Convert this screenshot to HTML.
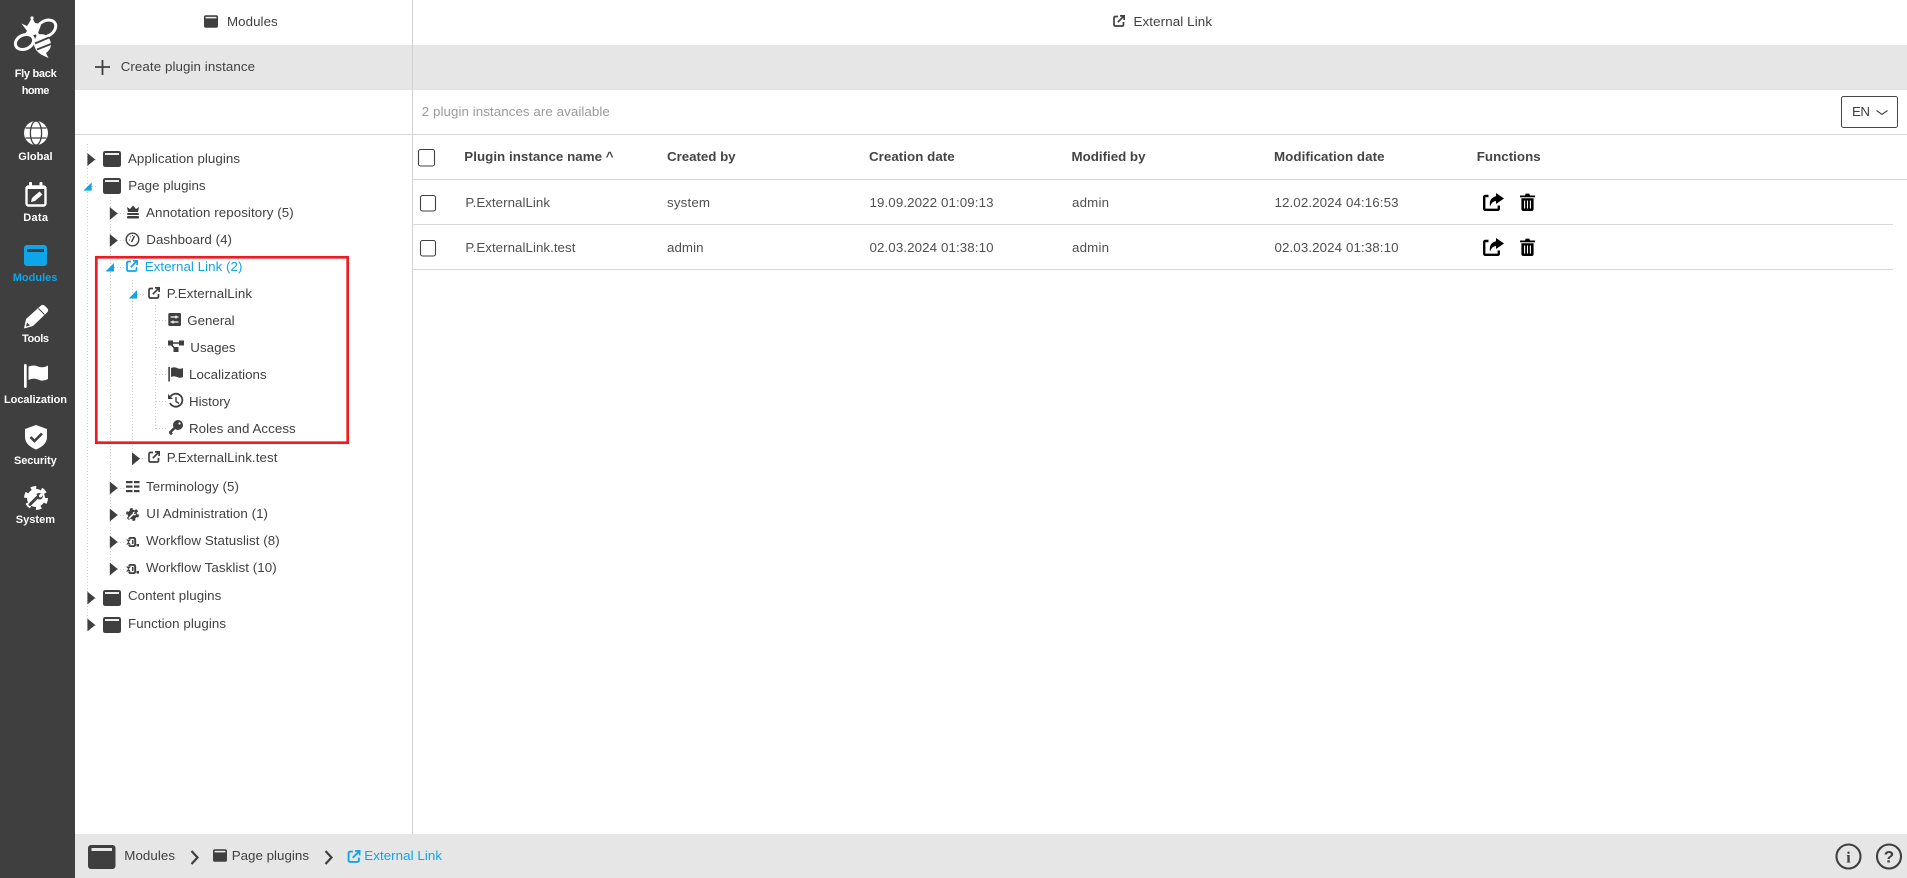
<!DOCTYPE html>
<html lang="en"><head><meta charset="utf-8"><title>Modules - External Link</title>
<style>
html,body{margin:0;padding:0;background:#fff;width:1907px;height:878px;overflow:hidden}
svg{display:block}
text{font-family:"Liberation Sans",Arial,sans-serif;font-size:13.33px;fill:#404040;white-space:pre}
.n text{font-size:11px;font-weight:bold;fill:#fff}
.h text{font-weight:bold;fill:#444}
.r text{fill:#505050}
.b{fill:#0ea5e9}
.d{stroke:#cfcfcf;stroke-width:1;stroke-dasharray:1 2;fill:none;shape-rendering:crispEdges}
</style></head><body>
<svg xmlns="http://www.w3.org/2000/svg" width="1907" height="878" viewBox="0 0 1907 878">
<defs>
<symbol id="win" viewBox="0 0 18 16" overflow="visible"><rect width="18" height="16" rx="2.2" fill="#3f3f3f"/><rect x="2" y="2" width="14" height="2" fill="#eee"/></symbol>
<symbol id="ext" viewBox="0 0 12 12" overflow="visible"><path d="M5 1.5H2.5Q1 1.5 1 3V9.5Q1 11 2.5 11H9Q10.5 11 10.5 9.5V7" fill="none" stroke="currentColor" stroke-width="1.7"/><path d="M4.8 7.2L10.5 1.5M7 .9H11.2V5" fill="none" stroke="currentColor" stroke-width="1.7"/></symbol>
<symbol id="arr" viewBox="0 0 8 13"><path d="M0 0L8 6.5L0 13Z" fill="#3f3f3f"/></symbol>
<symbol id="down" viewBox="0 0 8.5 8.5"><path d="M8.5 0V8.5H0Z" fill="#0ea5e9"/></symbol>
<symbol id="wf" viewBox="0 0 13 10"><path d="M3 2Q3.5 .8 5 .8H7Q9.200 .8 9.200 3V7Q9.200 9.200 7 9.200H5Q3.500 9.200 3 8" fill="none" stroke="#3f3f3f" stroke-width="1.900"/><path d="M0 2.500H5L2.500 5.200ZM0 7.500L2.500 4.800L5 7.500Z" fill="#3f3f3f"/><rect x="6" y="3" width="1.500" height="4" fill="#3f3f3f"/><rect x="10.500" y="7" width="2.500" height="2.500" fill="#3f3f3f"/></symbol>
<symbol id="gear" viewBox="0 0 24 24" overflow="visible"><circle cx="12" cy="12" r="9" fill="currentColor"/><circle cx="12" cy="12" r="10" fill="none" stroke="currentColor" stroke-width="4" stroke-dasharray="5.2 5.27"/><path d="M6 18.500L13 11.500" stroke="var(--k)" stroke-width="3" stroke-linecap="round"/><path d="M12.500 8.500Q13.500 6.500 17 7.200L14.800 9.500L15.200 11L17 11.500L19 9.200Q19 14 14.500 13.500" fill="var(--k)"/></symbol>
<symbol id="share" viewBox="0 0 21 18" overflow="visible"><path d="M5.500 3H2.500Q1.200 3 1.200 4.300V15.500Q1.200 16.800 2.500 16.800H14.500Q15.800 16.800 15.800 15.500V12.500" fill="none" stroke="#000" stroke-width="2.400"/><path d="M13 0L21 5.500L13 11V8Q9 8 7 13.500Q5.500 5 13 3.200Z" fill="#000"/></symbol>
<symbol id="trash" viewBox="0 0 15 18" overflow="visible"><path d="M0 2.500H5L5.700 .6H9.300L10 2.500H15V4.200H0Z" fill="#000"/><path d="M1.400 5.200H13.600V16Q13.600 18 11.600 18H3.400Q1.400 18 1.400 16Z" fill="#000"/><path d="M4.600 7.500V15.500M7.500 7.500V15.500M10.400 7.500V15.500" stroke="#fff" stroke-width="1.100"/></symbol>
</defs>

<rect width="1907" height="878" fill="#fff"/>
<rect x="75" y="45" width="1832" height="45" fill="#e6e6e6"/>
<rect x="75" y="834" width="1832" height="44" fill="#e6e6e6"/>
<rect x="412" y="0" width="1" height="834" fill="#d2d2d2"/>
<rect x="75" y="134" width="1832" height="1" fill="#d8d8d8"/>
<rect x="413" y="179" width="1494" height="1" fill="#d8d8d8"/>
<rect x="413" y="224" width="1480" height="1" fill="#d8d8d8"/>
<rect x="413" y="269" width="1480" height="1" fill="#d8d8d8"/>
<rect x="0" y="0" width="75" height="878" fill="#3f3f3f"/>

<!-- sidebar: bee -->
<g fill="none" stroke="#fff" stroke-width="3">
<ellipse cx="46" cy="28.500" rx="10.500" ry="7.500" transform="rotate(-32 46 28.500)"/>
<ellipse cx="24.500" cy="42" rx="9.500" ry="7" transform="rotate(-25 24.500 42)"/>
</g>
<path d="M21.500 23.500L27 26L29 23L32 17.500L35 23L38 23.500L41 25L38 33L31 36.500L24 35L27 31Z" fill="#fff"/>
<circle cx="32" cy="18" r="1.600" fill="#fff"/>
<path d="M37 35Q46 32 50 40Q53 48 46 53L48.500 58L42 55Q33 50 34 41Z" fill="#fff"/>
<path d="M35 43.500L49 37.500M37 49.500L51 44" stroke="#3f3f3f" stroke-width="1.800"/>

<!-- Global -->
<circle cx="36" cy="133" r="12" fill="#fff"/>
<g fill="none" stroke="#3f3f3f" stroke-width="1.300"><ellipse cx="36" cy="133" rx="5.600" ry="12"/><path d="M25.500 128H46.500M25.500 138H46.500"/></g>
<!-- Data -->
<rect x="26.500" y="186.500" width="19" height="19" rx="2" fill="none" stroke="#fff" stroke-width="2.400"/>
<rect x="26" y="186" width="20" height="3" fill="#fff"/>
<rect x="29" y="182" width="3" height="5" rx="1" fill="#fff"/><rect x="39.500" y="182" width="3" height="5" rx="1" fill="#fff"/>
<path d="M31 202L32 198L39.500 191.500L42.500 194.500L35 201Z" fill="#fff"/>
<!-- Modules -->
<rect x="24" y="245" width="23" height="21" rx="3" fill="#0ea5e9"/><rect x="27" y="249" width="17" height="3" fill="#3f3f3f"/>
<!-- Tools -->
<path d="M24 328.500L26 319L41 305.500Q43 304 45 306L47.500 308.500Q49 310.500 47 312.500L33 326Z" fill="#fff"/>
<path d="M38.500 308.500L44.500 314.500" stroke="#3f3f3f" stroke-width="1"/><path d="M26 326.500L27 322.500L30 325.500Z" fill="#3f3f3f"/>
<!-- Localization -->
<rect x="24" y="364" width="2.700" height="24" rx="1.200" fill="#fff"/>
<path d="M28.500 366.500Q34 364.500 38 366.500Q43 368.500 48 365.500V379Q43 382 38 379.500Q33 377.500 28.500 380Z" fill="#fff"/>
<!-- Security -->
<path d="M36 425L47 429V437Q47 445 36 449.500Q25 445 25 437V429Z" fill="#fff"/>
<path d="M30.500 437L34.500 441L42 433.500" fill="none" stroke="#3f3f3f" stroke-width="2.600"/>
<!-- System -->
<svg x="24" y="486" width="24" height="24" color="#fff" style="--k:#3f3f3f"><use href="#gear"/></svg>

<g class="n">
<text x="14.700" y="77" textLength="42" lengthAdjust="spacing">Fly back</text>
<text x="21.700" y="94" textLength="27.700" lengthAdjust="spacing">home</text>
<text x="18.300" y="160" textLength="34.300" lengthAdjust="spacing">Global</text>
<text x="23.300" y="221" textLength="24.700" lengthAdjust="spacing">Data</text>
<text x="12.700" y="281" textLength="44.700" lengthAdjust="spacing" style="fill:#0ea5e9">Modules</text>
<text x="22" y="342" textLength="27" lengthAdjust="spacing">Tools</text>
<text x="4" y="403" textLength="63" lengthAdjust="spacing">Localization</text>
<text x="14" y="464" textLength="42.700" lengthAdjust="spacing">Security</text>
<text x="15.700" y="523" textLength="39.300" lengthAdjust="spacing">System</text>
</g>

<!-- top bars -->
<use href="#win" x="204" y="15" width="14" height="13"/>
<text x="227" y="26" textLength="50.700" lengthAdjust="spacing">Modules</text>
<svg x="1113" y="15" width="12" height="12" color="#3f3f3f"><use href="#ext"/></svg>
<text x="1133.500" y="26" textLength="78.500" lengthAdjust="spacing">External Link</text>
<path d="M95 67H110M102.500 60V75" stroke="#3f3f3f" stroke-width="1.800"/>
<text x="120.700" y="71" textLength="134.300" lengthAdjust="spacing">Create plugin instance</text>
<text x="421.800" y="116" textLength="188" lengthAdjust="spacing" style="fill:#9a9a9a">2 plugin instances are available</text>
<rect x="1841.500" y="96.500" width="56" height="31" rx="2" fill="#fff" stroke="#444"/>
<text x="1852" y="116" textLength="18" lengthAdjust="spacing">EN</text>
<path d="M1876.500 110.500L1882 114.500L1887.500 110.500" fill="none" stroke="#404040" stroke-width="1.100"/>

<!-- tree dotted lines -->
<path class="d" d="M87.500 144V625M110.500 197V570M132.500 280V457M155.500 305V430"/>
<path class="d" d="M95 159.500H98M92 186.500H98M95 625.500H98M95 598.500H98M117 213.500H124M117 240.500H124M114 267.500H124M137 294.500H146M139 458.500H146M117 488.500H124M117 515.500H124M117 542.500H124M117 569.500H124M156 320.500H166M156 347.500H166M156 374.500H166M156 401.500H166M156 428.500H166"/>

<!-- tree arrows -->
<use href="#arr" x="87.300" y="153" width="8" height="13"/>
<use href="#down" x="83.300" y="182.300" width="8.500" height="8.500"/>
<use href="#arr" x="109.700" y="207" width="8" height="13"/>
<use href="#arr" x="109.700" y="234" width="8" height="13"/>
<use href="#down" x="105.500" y="263" width="8.500" height="8.500"/>
<use href="#down" x="128.700" y="290" width="8.500" height="8.500"/>
<use href="#arr" x="132" y="452.200" width="8" height="13"/>
<use href="#arr" x="109.700" y="481.500" width="8" height="13"/>
<use href="#arr" x="109.700" y="508.500" width="8" height="13"/>
<use href="#arr" x="109.700" y="535.500" width="8" height="13"/>
<use href="#arr" x="109.700" y="562.500" width="8" height="13"/>
<use href="#arr" x="87.300" y="591.500" width="8" height="13"/>
<use href="#arr" x="87.300" y="618.500" width="8" height="13"/>

<!-- tree icons -->
<use href="#win" x="103" y="151" width="18" height="16"/>
<use href="#win" x="103" y="178" width="18" height="16"/>
<use href="#win" x="103" y="590" width="18" height="16"/>
<use href="#win" x="103" y="617" width="18" height="16"/>
<!-- annotation -->
<path d="M127 207L130 209L133 205.500L136 209L139 207L138 212H128Z" fill="#3f3f3f"/>
<rect x="127" y="213" width="12" height="2" rx="1" fill="#3f3f3f"/><rect x="127" y="216" width="12" height="2.500" rx="1" fill="#3f3f3f"/>
<!-- dashboard -->
<circle cx="132.500" cy="239.500" r="6.300" fill="none" stroke="#3f3f3f" stroke-width="1.400"/>
<path d="M131.500 242L134.500 236" stroke="#3f3f3f" stroke-width="1.400"/>
<path d="M129 240H130M130 236.500L130.700 237.200M132.500 235V236" stroke="#3f3f3f" stroke-width="1"/>
<!-- ext icons -->
<svg x="126" y="260" width="12" height="12" color="#0ea5e9"><use href="#ext"/></svg>
<svg x="148" y="287" width="12" height="12" color="#3f3f3f"><use href="#ext"/></svg>
<svg x="148" y="451" width="12" height="12" color="#3f3f3f"><use href="#ext"/></svg>
<!-- general -->
<rect x="168.300" y="313" width="12.700" height="13" rx="1.500" fill="#3f3f3f"/>
<path d="M170.500 317H178.500M170.500 322H178.500" stroke="#fff" stroke-width="1.200"/><path d="M176 315.500V318.500M173 320.500V323.500" stroke="#fff" stroke-width="1.200"/>
<!-- usages -->
<path d="M170 343H181M170 343L176 350" stroke="#3f3f3f" stroke-width="1.600"/>
<rect x="168" y="340.500" width="5" height="5" fill="#3f3f3f"/><rect x="179" y="340.500" width="5" height="5" fill="#3f3f3f"/><rect x="173.500" y="347" width="5" height="5" fill="#3f3f3f"/>
<!-- localization -->
<rect x="168.300" y="367" width="1.600" height="14.500" fill="#3f3f3f"/>
<path d="M171 368Q174 366.500 177 368Q180 369.500 183 368V377Q180 378.500 177 377Q174 375.500 171 377Z" fill="#3f3f3f"/>
<!-- history -->
<path d="M170.500 396.500A6.500 6.500 0 1 1 170 403" fill="none" stroke="#3f3f3f" stroke-width="1.800"/>
<path d="M168 394V399H173Z" fill="#3f3f3f"/><path d="M176 397V401.500L179 403.500" fill="none" stroke="#3f3f3f" stroke-width="1.400"/>
<!-- key -->
<circle cx="178" cy="425" r="5" fill="#3f3f3f"/><circle cx="179.500" cy="423.500" r="1.100" fill="#fff"/>
<path d="M174.500 428L169.500 433M170 432.500L172 434.300" stroke="#3f3f3f" stroke-width="2.600"/>
<!-- terminology -->
<g fill="#3f3f3f">
<rect x="126" y="481" width="6.500" height="2.200"/><rect x="134" y="481" width="5.500" height="2.200"/>
<rect x="126" y="485.500" width="6.500" height="2.200"/><rect x="134" y="485.500" width="5.500" height="2.200"/>
<rect x="126" y="490" width="6.500" height="2.200"/><rect x="134" y="490" width="5.500" height="2.200"/></g>
<!-- ui admin -->
<svg x="126" y="508" width="13" height="13" viewBox="0 0 24 24" color="#3f3f3f" style="--k:#fff"><use href="#gear"/></svg>
<use href="#wf" x="126" y="537" width="13" height="10"/>
<use href="#wf" x="126" y="564" width="13" height="10"/>

<!-- tree text -->
<text x="128" y="163" textLength="112" lengthAdjust="spacing">Application plugins</text>
<text x="128.300" y="190" textLength="77.300" lengthAdjust="spacing">Page plugins</text>
<text x="146" y="217" textLength="147.700" lengthAdjust="spacing">Annotation repository (5)</text>
<text x="146.300" y="244" textLength="85.700" lengthAdjust="spacing">Dashboard (4)</text>
<text x="144.700" y="271" textLength="97.700" lengthAdjust="spacing" class="b">External Link (2)</text>
<text x="166.700" y="298" textLength="85.300" lengthAdjust="spacing">P.ExternalLink</text>
<text x="187.300" y="325" textLength="47.300" lengthAdjust="spacing">General</text>
<text x="190.300" y="352" textLength="45.300" lengthAdjust="spacing">Usages</text>
<text x="189" y="379" textLength="77.700" lengthAdjust="spacing">Localizations</text>
<text x="189" y="406" textLength="41.300" lengthAdjust="spacing">History</text>
<text x="189" y="433" textLength="106.700" lengthAdjust="spacing">Roles and Access</text>
<text x="166.700" y="462" textLength="110.700" lengthAdjust="spacing">P.ExternalLink.test</text>
<text x="146" y="491" textLength="93" lengthAdjust="spacing">Terminology (5)</text>
<text x="146.300" y="518" textLength="121.700" lengthAdjust="spacing">UI Administration (1)</text>
<text x="146" y="545" textLength="133.700" lengthAdjust="spacing">Workflow Statuslist (8)</text>
<text x="146" y="572" textLength="130.700" lengthAdjust="spacing">Workflow Tasklist (10)</text>
<text x="128" y="600" textLength="93.300" lengthAdjust="spacing">Content plugins</text>
<text x="128" y="628" textLength="98" lengthAdjust="spacing">Function plugins</text>

<!-- red highlight -->
<rect x="96.300" y="257.300" width="251.400" height="185.400" fill="none" stroke="#ed1c24" stroke-width="2.700"/>

<!-- table -->
<rect x="418.500" y="149.500" width="16" height="16.500" rx="2" fill="#fff" stroke="#404040" stroke-width="1.100"/>
<rect x="420.500" y="195.500" width="15" height="15.500" rx="2" fill="#fff" stroke="#404040" stroke-width="1.100"/>
<rect x="420.500" y="240.500" width="15" height="15.500" rx="2" fill="#fff" stroke="#404040" stroke-width="1.100"/>
<g class="h">
<text x="464.300" y="161" textLength="149.300" lengthAdjust="spacing">Plugin instance name ^</text>
<text x="667" y="161" textLength="68.600" lengthAdjust="spacing">Created by</text>
<text x="869" y="161" textLength="85.700" lengthAdjust="spacing">Creation date</text>
<text x="1071.500" y="161" textLength="74" lengthAdjust="spacing">Modified by</text>
<text x="1274" y="161" textLength="110.500" lengthAdjust="spacing">Modification date</text>
<text x="1476.700" y="161" textLength="64" lengthAdjust="spacing">Functions</text>
</g>
<g class="r">
<text x="465.400" y="207" textLength="84.600" lengthAdjust="spacing">P.ExternalLink</text>
<text x="667" y="207" textLength="43" lengthAdjust="spacing">system</text>
<text x="869.500" y="207" textLength="124" lengthAdjust="spacing">19.09.2022 01:09:13</text>
<text x="1072" y="207" textLength="37" lengthAdjust="spacing">admin</text>
<text x="1274.500" y="207" textLength="124" lengthAdjust="spacing">12.02.2024 04:16:53</text>
<text x="465.400" y="252" textLength="110" lengthAdjust="spacing">P.ExternalLink.test</text>
<text x="667" y="252" textLength="36.500" lengthAdjust="spacing">admin</text>
<text x="869.500" y="252" textLength="124" lengthAdjust="spacing">02.03.2024 01:38:10</text>
<text x="1072" y="252" textLength="37" lengthAdjust="spacing">admin</text>
<text x="1274.500" y="252" textLength="124" lengthAdjust="spacing">02.03.2024 01:38:10</text>
</g>
<use href="#share" x="1483" y="193" width="21" height="18"/>
<use href="#trash" x="1520" y="193" width="15" height="18"/>
<use href="#share" x="1483" y="238" width="21" height="18"/>
<use href="#trash" x="1520" y="238" width="15" height="18"/>

<!-- bottom bar -->
<rect x="88" y="845" width="27.500" height="24" rx="3" fill="#3f3f3f"/><rect x="91.500" y="848" width="20.500" height="3" fill="#e6e6e6"/>
<text x="124.300" y="860" textLength="50.700" lengthAdjust="spacing">Modules</text>
<path d="M191.500 851L197.500 857.500L191.500 864M325.500 851L331.500 857.500L325.500 864" fill="none" stroke="#3f3f3f" stroke-width="2.200"/>
<use href="#win" x="213" y="849" width="14" height="13"/>
<text x="231.700" y="860" textLength="77.300" lengthAdjust="spacing">Page plugins</text>
<svg x="347.500" y="850" width="13" height="13" viewBox="0 0 12 12" color="#0ea5e9"><use href="#ext"/></svg>
<text x="364.300" y="860" textLength="77.700" lengthAdjust="spacing" class="b">External Link</text>
<circle cx="1848.500" cy="856.500" r="12" fill="none" stroke="#3f3f3f" stroke-width="2.100"/>
<text x="1848.500" y="862.500" text-anchor="middle" style="font:bold 16px 'Liberation Serif',serif;fill:#3f3f3f">i</text>
<circle cx="1889" cy="856.500" r="12" fill="none" stroke="#3f3f3f" stroke-width="2.100"/>
<text x="1889" y="862.500" text-anchor="middle" style="font:bold 17px 'Liberation Sans',sans-serif;fill:#3f3f3f">?</text>
</svg>
</body></html>
